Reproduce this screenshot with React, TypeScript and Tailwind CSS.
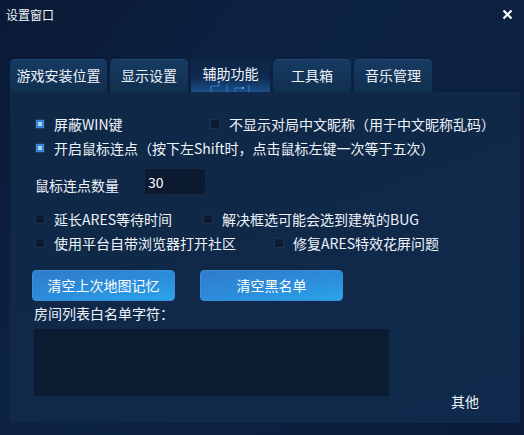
import React, { useState } from 'react';

const font = { fontFamily: '"Microsoft YaHei", "Noto Sans CJK SC", "Noto Sans", sans-serif' };

const tabs = ['游戏安装位置', '显示设置', '辅助功能', '工具箱', '音乐管理'];

const Check = ({ checked, label, onToggle }: { checked: boolean; label: string; onToggle: () => void }) => (
  <label className="flex items-center gap-[9px] cursor-pointer" onClick={onToggle}>
    <span
      className={
        checked
          ? 'w-[10px] h-[10px] rounded-[1px] border border-[#1d3a60] bg-[#3a86d4] flex items-center justify-center'
          : 'w-[10px] h-[10px] rounded-[1px] border border-[#1b3352] bg-[#0c1b31]'
      }
    >
      {checked && <span className="w-[4px] h-[4px] bg-[#a9cdf2]" />}
    </span>
    <span className="text-[14px] leading-[18px] text-[#eef3fa] whitespace-nowrap">{label}</span>
  </label>
);

export default function App() {
  const [active, setActive] = useState(2);
  const [opts, setOpts] = useState<Record<string, boolean>>({
    win: true,
    nick: false,
    click: true,
    ares: false,
    bug: false,
    browser: false,
    fix: false,
  });
  const [count, setCount] = useState('30');
  const toggle = (k: string) => setOpts((o) => ({ ...o, [k]: !o[k] }));

  return (
    <div
      className="w-[524px] h-[435px] bg-[linear-gradient(125deg,#0a1a36_0%,#0d2344_45%,#0a1c38_100%)] text-white relative overflow-hidden flex flex-col"
      style={font}
    >
      {/* title bar */}
      <div className="h-[34px] flex items-start justify-between pl-[6px] pr-[11px] pt-[6px]">
        <span className="text-[12px] leading-[18px] text-[#f1f4f8]">设置窗口</span>
        <button className="mt-[3px] text-white">
          <svg width="11" height="11" viewBox="0 0 11 11">
            <path d="M1.5 1.5 L9.5 9.5 M9.5 1.5 L1.5 9.5" stroke="#fff" strokeWidth="2.2" />
          </svg>
        </button>
      </div>

      {/* tabs */}
      <div className="mt-[25px] pl-[10px] flex items-end gap-[3px] h-[33px]">
        {tabs.map((t, i) =>
          i === active ? (
            <button
              key={t}
              onClick={() => setActive(i)}
              className="relative w-[79px] h-[33px] bg-[linear-gradient(180deg,#0d2546_0%,#0e2a50_55%,#1a4f8a_100%)] text-[14px] text-[#f3f6fa] pb-[4px] overflow-hidden"
            >
              <svg className="absolute left-0 bottom-0" width="79" height="12" viewBox="0 0 79 12">
                <path d="M20 12 V6 H28 V2 M36 12 V4 M44 12 V8 H52 M58 12 V5" stroke="#3a9be8" strokeWidth="1" fill="none" opacity="0.7" />
                <circle cx="28" cy="2" r="1" fill="#6cc4ff" />
                <circle cx="52" cy="8" r="1" fill="#6cc4ff" />
              </svg>
              <span className="relative">{t}</span>
            </button>
          ) : (
            <button
              key={t}
              onClick={() => setActive(i)}
              className={
                (i === 0 ? 'w-[97px]' : 'w-[78px]') +
                ' h-[33px] rounded-t-[5px] bg-[linear-gradient(180deg,#163a62_0%,#11304f_100%)] border-t border-[#1f4670] text-[14px] text-[#eef2f7] pb-[2px]'
              }
            >
              {t}
            </button>
          )
        )}
      </div>

      {/* panel */}
      <div className="ml-[10px] w-[510px] h-[331px] bg-[linear-gradient(160deg,#0f2846_0%,#10294a_60%,#0f2a4c_100%)] rounded-b-[3px] pl-[25px] pt-[23px] relative">
        <div className="flex flex-col gap-[6px]">
          <div className="flex items-center">
            <div className="w-[175px]">
              <Check checked={opts.win} label="屏蔽WIN键" onToggle={() => toggle('win')} />
            </div>
            <Check checked={opts.nick} label="不显示对局中文昵称（用于中文昵称乱码）" onToggle={() => toggle('nick')} />
          </div>
          <Check checked={opts.click} label="开启鼠标连点（按下左Shift时，点击鼠标左键一次等于五次）" onToggle={() => toggle('click')} />
        </div>

        <div className="mt-[10px] flex items-center">
          <span className="w-[109px] text-[14px] text-[#eef3fa] pt-[8px]">鼠标连点数量</span>
          <input
            value={count}
            onChange={(e) => setCount(e.target.value)}
            className="w-[62px] h-[27px] rounded-[3px] bg-[#0b1a2f] border border-[#12294a] px-[3px] text-[14px] text-white outline-none"
          />
        </div>

        <div className="mt-[14px] flex flex-col gap-[6px]">
          <div className="flex items-center">
            <div className="w-[168px]">
              <Check checked={opts.ares} label="延长ARES等待时间" onToggle={() => toggle('ares')} />
            </div>
            <Check checked={opts.bug} label="解决框选可能会选到建筑的BUG" onToggle={() => toggle('bug')} />
          </div>
          <div className="flex items-center">
            <div className="w-[239px]">
              <Check checked={opts.browser} label="使用平台自带浏览器打开社区" onToggle={() => toggle('browser')} />
            </div>
            <Check checked={opts.fix} label="修复ARES特效花屏问题" onToggle={() => toggle('fix')} />
          </div>
        </div>

        <div className="mt-[18px] -ml-[3px] flex gap-[25px]">
          <button className="w-[143px] h-[31px] rounded-[4px] border border-[#3b8fd9] bg-[linear-gradient(170deg,#2f7ccb_0%,#2b8fdc_60%,#2aa6ea_100%)] text-[14px] text-white">
            清空上次地图记忆
          </button>
          <button className="w-[143px] h-[31px] rounded-[4px] border border-[#3b8fd9] bg-[linear-gradient(170deg,#2f7ccb_0%,#2b8fdc_60%,#2aa6ea_100%)] text-[14px] text-white">
            清空黑名单
          </button>
        </div>

        <div className="mt-[2px] -ml-[1px] text-[14px] leading-[20px] text-[#eef3fa]">房间列表白名单字符：</div>
        <textarea className="mt-[5px] -ml-[2px] w-[357px] h-[69px] rounded-[3px] bg-[#0b1b30] border border-[#11294a] outline-none resize-none text-[13px] text-white p-1" />

        <div className="absolute right-[41px] bottom-[11px] text-[14px] text-[#eef3fa]">其他</div>
      </div>
    </div>
  );
}
